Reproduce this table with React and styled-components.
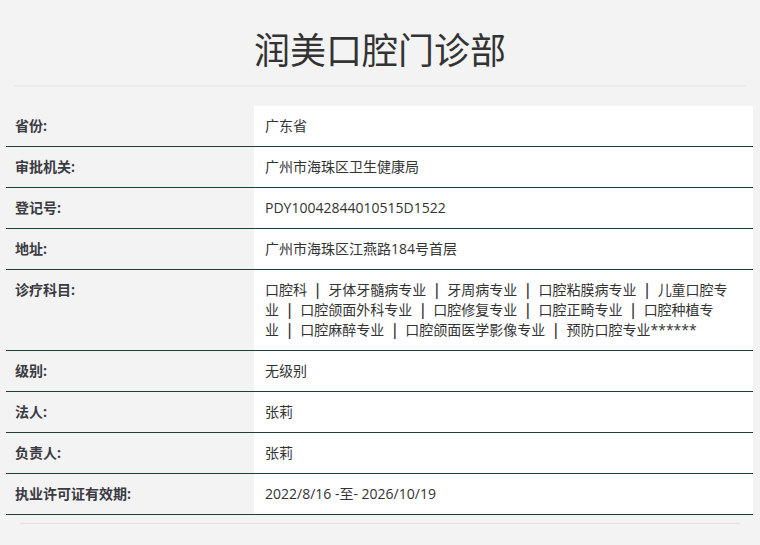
import React from "react";
import styled, { createGlobalStyle } from "styled-components";

const GlobalStyle = createGlobalStyle`
  html, body {
    margin: 0;
    padding: 0;
    background: #f3f3f3;
    font-family: "Open Sans", "Noto Sans CJK SC", sans-serif;
    color: #333;
  }
`;

const Page = styled.div`
  width: 760px;
  height: 545px;
  overflow: hidden;
  background: #f3f3f3;
`;

const Header = styled.div`
  padding-top: 24px;
  text-align: center;
`;

const Title = styled.h1`
  margin: 0;
  font-family: "Noto Sans CJK SC", sans-serif;
  font-size: 36px;
  line-height: 48px;
  font-weight: 400;
  color: #333;
`;

const Divider = styled.div`
  margin: 13px 14px 0 14px;
  height: 2px;
  background: #ebebeb;
`;

const Table = styled.div`
  margin: 19px 7px 0 6px;
  display: grid;
  grid-template-columns: 248px 1fr;
`;

const Label = styled.div`
  padding: 10px 9px;
  line-height: 20px;
  font-size: 14px;
  font-weight: 700;
  color: #3a3a42;
  background: #f3f3f3;
  border-bottom: 1px solid #1f3f33;
`;

const Value = styled.div`
  padding: 10px 18px 10px 11px;
  line-height: 20px;
  font-size: 14px;
  color: #333;
  background: #fff;
  border-bottom: 1px solid #1f3f33;
`;

const Sep = styled.span`
  margin: 0 8.5px;
  font-family: "Noto Sans CJK SC", sans-serif;
  font-weight: 700;
  line-height: 0;
`;

const Footer = styled.div`
  margin: 8px 20px 0 20px;
  height: 1px;
  background: #f0dce0;
  box-shadow: 0 -1px 0 #eaf2ee;
`;

const rows = [
  ["省份:", "广东省"],
  ["审批机关:", "广州市海珠区卫生健康局"],
  ["登记号:", "PDY10042844010515D1522"],
  ["地址:", "广州市海珠区江燕路184号首层"],
  [
    "诊疗科目:",
    [
      "口腔科",
      "牙体牙髓病专业",
      "牙周病专业",
      "口腔粘膜病专业",
      "儿童口腔专业",
      "口腔颌面外科专业",
      "口腔修复专业",
      "口腔正畸专业",
      "口腔种植专业",
      "口腔麻醉专业",
      "口腔颌面医学影像专业",
      "预防口腔专业******",
    ],
  ],
  ["级别:", "无级别"],
  ["法人:", "张莉"],
  ["负责人:", "张莉"],
  ["执业许可证有效期:", "2022/8/16 -至- 2026/10/19"],
];

function App() {
  return (
    <>
      <GlobalStyle />
      <Page>
        <Header>
          <Title>润美口腔门诊部</Title>
          <Divider />
        </Header>
        <Table>
          {rows.map(([label, value]) => (
            <React.Fragment key={label}>
              <Label>{label}</Label>
              <Value>
                {Array.isArray(value)
                  ? value.map((item, i) => (
                      <React.Fragment key={item}>
                        {i > 0 && <Sep>|</Sep>}
                        {item}
                      </React.Fragment>
                    ))
                  : value}
              </Value>
            </React.Fragment>
          ))}
        </Table>
        <Footer />
      </Page>
    </>
  );
}

export default App;
